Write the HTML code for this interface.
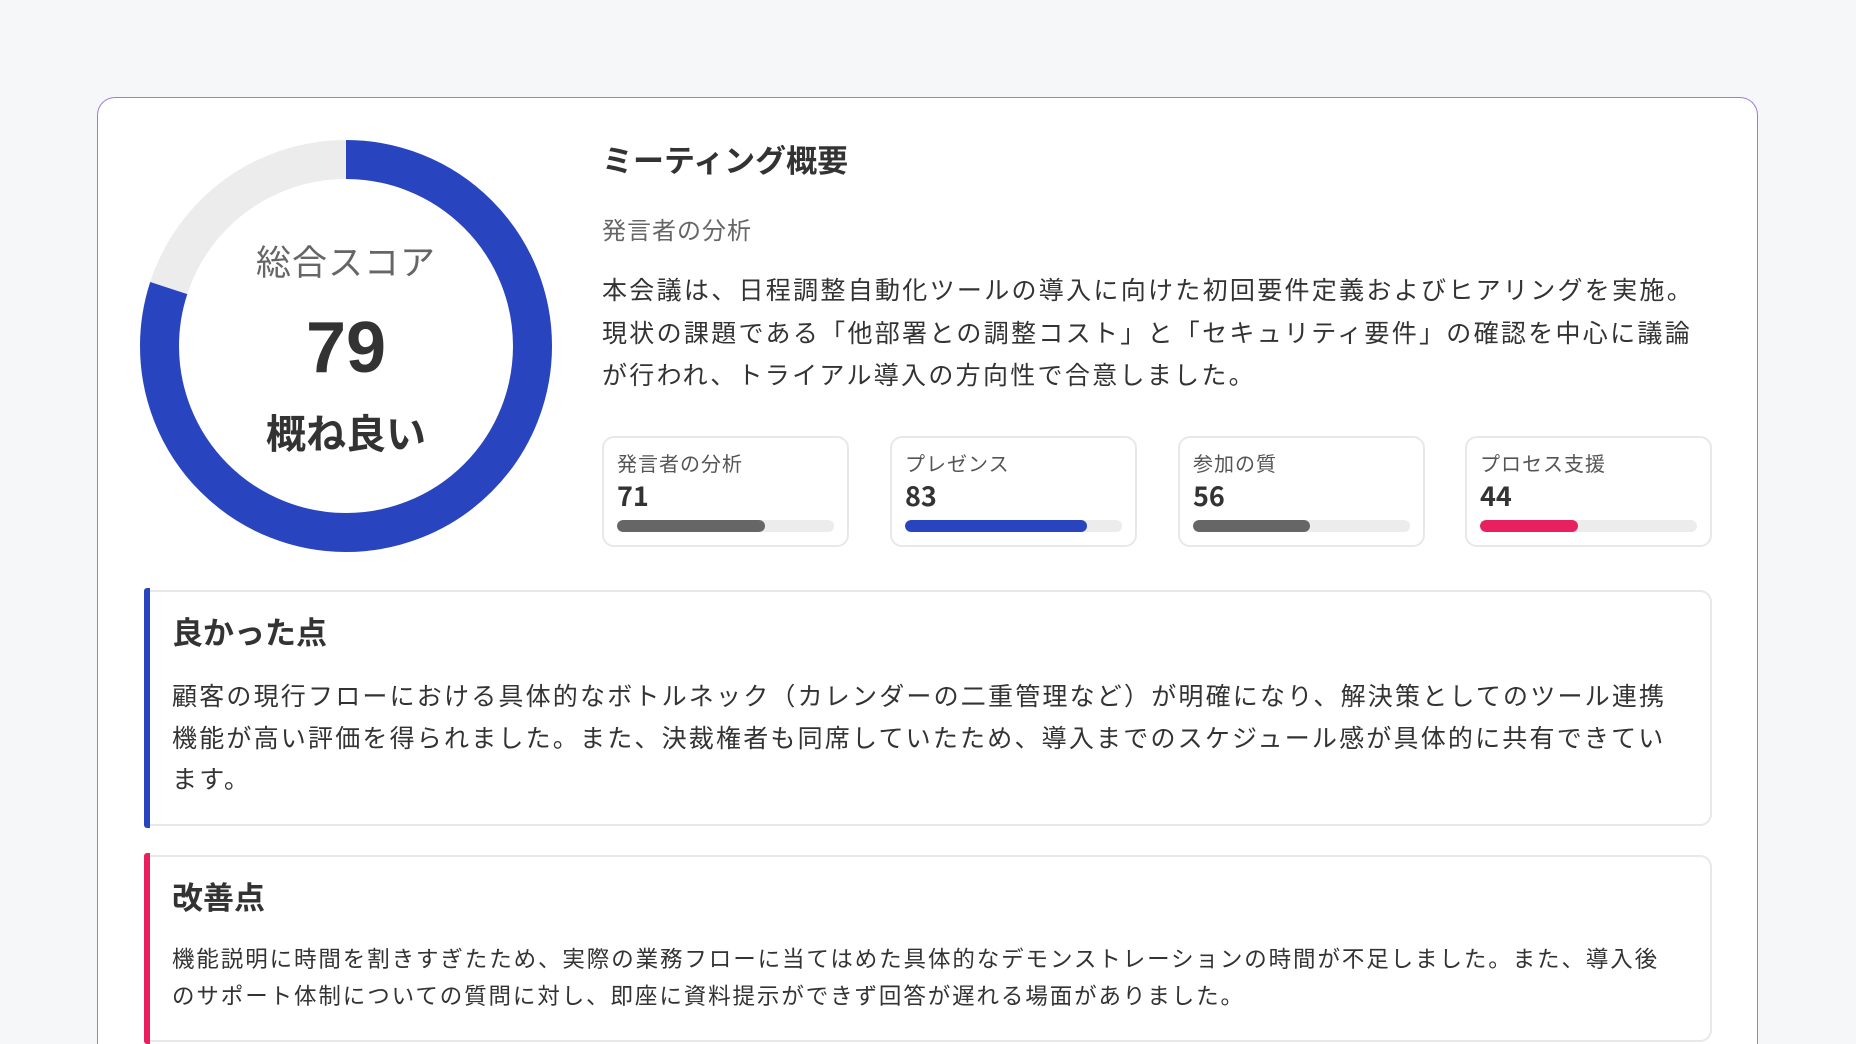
<!DOCTYPE html>
<html><head><meta charset="utf-8">
<style>
html,body{margin:0;padding:0;width:1856px;height:1044px;overflow:hidden;}
body{background:#f5f7f9;position:relative;font-family:"Liberation Sans","Noto Sans CJK JP",sans-serif;color:#333;}
.card{position:absolute;left:97px;top:97px;width:1661px;height:947px;background:#fff;border:1.5px solid #9a7be8;border-bottom:none;border-radius:18px 18px 0 0;box-sizing:border-box;}
.abs{position:absolute;white-space:nowrap;}
.m{position:absolute;top:436px;width:247px;height:111px;border:2px solid #e8e8e8;border-radius:12px;box-sizing:border-box;background:#fff;}
.m .l{position:absolute;left:13px;top:10px;font-size:20px;color:#555;letter-spacing:1px;}
.m .v{position:absolute;left:13px;top:37px;font-size:27px;font-weight:bold;color:#333;font-family:"Noto Sans CJK JP",sans-serif;}
.m .b{position:absolute;left:13px;right:13px;top:82px;height:12px;border-radius:6px;background:#ececec;overflow:hidden;}
.m .b i{display:block;height:100%;border-radius:6px;}
.sec{position:absolute;left:144px;width:1568px;background:#fff;border:2px solid #e8e8e8;border-left:none;border-radius:0 12px 12px 0;box-sizing:border-box;}
</style></head><body>
<div class="card"></div>
<svg class="abs" style="left:140px;top:140px" width="412" height="412" viewBox="0 0 412 412">
<circle cx="206" cy="206" r="186.5" fill="none" stroke="#ececec" stroke-width="39"/>
<circle cx="206" cy="206" r="186.5" fill="none" stroke="#2944bf" stroke-width="39" stroke-dasharray="937.5 1171.8" transform="rotate(-90 206 206)"/>
</svg>
<div class="abs" style="left:246px;width:200px;text-align:center;top:235px;font-size:35px;color:#666;letter-spacing:1px">総合スコア</div>
<div class="abs" style="left:246px;width:200px;text-align:center;top:307px;font-size:72px;font-weight:bold;color:#333">79</div>
<div class="abs" style="left:246px;width:200px;text-align:center;top:402px;font-size:40px;font-weight:bold;color:#333">概ね良い</div>

<div class="abs" style="left:602px;top:136px;font-size:31px;font-weight:bold;color:#333">ミーティング概要</div>
<div class="abs" style="left:602px;top:211px;font-size:24px;color:#666;letter-spacing:1px">発言者の分析</div>
<div class="abs" style="left:602px;top:270px;font-size:25px;line-height:42.5px;letter-spacing:2.3px;color:#333">本会議は、日程調整自動化ツールの導入に向けた初回要件定義およびヒアリングを実施。<br>現状の課題である「他部署との調整コスト」と「セキュリティ要件」の確認を中心に議論<br>が行われ、トライアル導入の方向性で合意しました。</div>

<div class="m" style="left:602px"><div class="l">発言者の分析</div><div class="v">71</div><div class="b"><i style="width:68%;background:#666"></i></div></div>
<div class="m" style="left:890px"><div class="l">プレゼンス</div><div class="v">83</div><div class="b"><i style="width:84%;background:#2944bf"></i></div></div>
<div class="m" style="left:1178px"><div class="l">参加の質</div><div class="v">56</div><div class="b"><i style="width:54%;background:#666"></i></div></div>
<div class="m" style="left:1465px"><div class="l">プロセス支援</div><div class="v">44</div><div class="b"><i style="width:45%;background:#e8205f"></i></div></div>

<div class="sec" style="top:590px;height:236px"></div>
<div class="abs" style="left:144px;top:588px;width:6px;height:240px;background:#2944bf;border-radius:3px 0 0 3px"></div>
<div class="abs" style="left:172px;top:608px;font-size:31px;font-weight:bold">良かった点</div>
<div class="abs" style="left:172px;top:677px;font-size:25px;line-height:41.5px;letter-spacing:2.2px">顧客の現行フローにおける具体的なボトルネック（カレンダーの二重管理など）が明確になり、解決策としてのツール連携<br>機能が高い評価を得られました。また、決裁権者も同席していたため、導入までのスケジュール感が具体的に共有できてい<br>ます。</div>

<div class="sec" style="top:855px;height:187px"></div>
<div class="abs" style="left:144px;top:853px;width:6px;height:191px;background:#e8205f;border-radius:3px 0 0 3px"></div>
<div class="abs" style="left:172px;top:873px;font-size:31px;font-weight:bold">改善点</div>
<div class="abs" style="left:172px;top:941px;font-size:22.5px;line-height:37px;letter-spacing:1.9px">機能説明に時間を割きすぎたため、実際の業務フローに当てはめた具体的なデモンストレーションの時間が不足しました。また、導入後<br>のサポート体制についての質問に対し、即座に資料提示ができず回答が遅れる場面がありました。</div>
</body></html>
